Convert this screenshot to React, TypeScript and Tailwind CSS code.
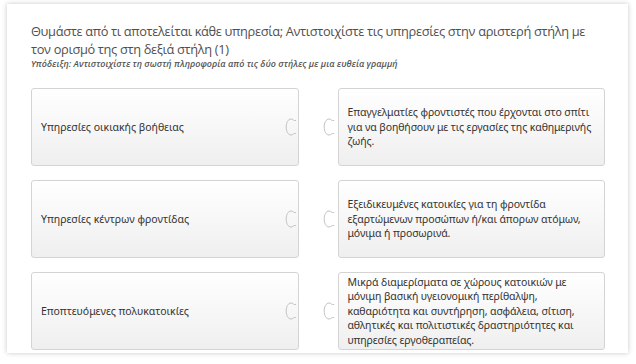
import React from "react";

const rows: { left: string; right: string }[] = [
  {
    left: "Υπηρεσίες οικιακής βοήθειας",
    right:
      "Επαγγελματίες φροντιστές που έρχονται στο σπίτι για να βοηθήσουν με τις εργασίες της καθημερινής ζωής.",
  },
  {
    left: "Υπηρεσίες κέντρων φροντίδας",
    right:
      "Εξειδικευμένες κατοικίες για τη φροντίδα εξαρτώμενων προσώπων ή/και άπορων ατόμων, μόνιμα ή προσωρινά.",
  },
  {
    left: "Εποπτευόμενες πολυκατοικίες",
    right:
      "Μικρά διαμερίσματα σε χώρους κατοικιών με μόνιμη βασική υγειονομική περίθαλψη, καθαριότητα και συντήρηση, ασφάλεια, σίτιση, αθλητικές και πολιτιστικές δραστηριότητες και υπηρεσίες εργοθεραπείας.",
  },
];

function Connector({ className }: { className: string }) {
  return (
    <svg
      className={className}
      width="12"
      height="18"
      viewBox="0 0 12 18"
      fill="none"
    >
      <path
        d="M11 2.5 L9.5 2.5 C8.3 2.5 8 1 6 1 C3.2 1 1.2 4.5 1.2 9 C1.2 13.5 3.2 17 6 17 C8 17 8.3 15.5 9.5 15.5 L11 15.5"
        stroke="#c2c2c2"
        strokeWidth="1"
      />
    </svg>
  );
}

export default function App() {
  return (
    <div
      className="w-[636px] h-[364px] bg-white pt-[4px] pl-[7px] overflow-hidden"
      style={{ fontFamily: '"Open Sans", "Noto Sans", sans-serif' }}
    >
      <div className="w-[621px] h-[349px] bg-white shadow-[0_0_5px_rgba(0,0,0,0.22)] pl-[24px] pr-[23px] pt-[18px] overflow-hidden">
        <h1 className="text-[12.8px] leading-[18px] tracking-[-0.33px] text-[#4f4f4f] font-normal">
          Θυμάστε από τι αποτελείται κάθε υπηρεσία; Αντιστοιχίστε τις υπηρεσίες
          στην αριστερή στήλη με τον ορισμό της στη δεξιά στήλη (1)
        </h1>
        <p className="text-[9px] leading-[11px] italic font-semibold text-[#555]">
          Υπόδειξη: Αντιστοιχίστε τη σωστή πληροφορία από τις δύο στήλες με μια
          ευθεία γραμμή
        </p>
        <div className="grid grid-cols-2 gap-x-[39px] gap-y-[14px] mt-[19px]">
          {rows.map((r, i) => (
            <React.Fragment key={i}>
              <div className="relative h-[78px] rounded-[3px] border border-[#d4d4d4] bg-gradient-to-b from-[#ffffff] to-[#efefef] flex items-center pl-[9px] pr-[12px]">
                <span
                  className="text-[10.5px] leading-[14.5px] text-[#333]"
                  style={{ fontFamily: '"Noto Sans", "Open Sans", sans-serif' }}
                >
                  {r.left}
                </span>
                <Connector className="absolute right-[1px] top-1/2 -translate-y-1/2" />
              </div>
              <div className="relative h-[78px] rounded-[3px] border border-[#d4d4d4] bg-gradient-to-b from-[#ffffff] to-[#efefef] flex items-center pl-[9px] pr-[6px]">
                <span
                  className="text-[10.5px] leading-[14.5px] tracking-[-0.1px] text-[#333]"
                  style={{ fontFamily: '"Noto Sans", "Open Sans", sans-serif' }}
                >
                  {r.right}
                </span>
                <Connector className="absolute left-[-16px] top-1/2 -translate-y-1/2" />
              </div>
            </React.Fragment>
          ))}
        </div>
      </div>
    </div>
  );
}
